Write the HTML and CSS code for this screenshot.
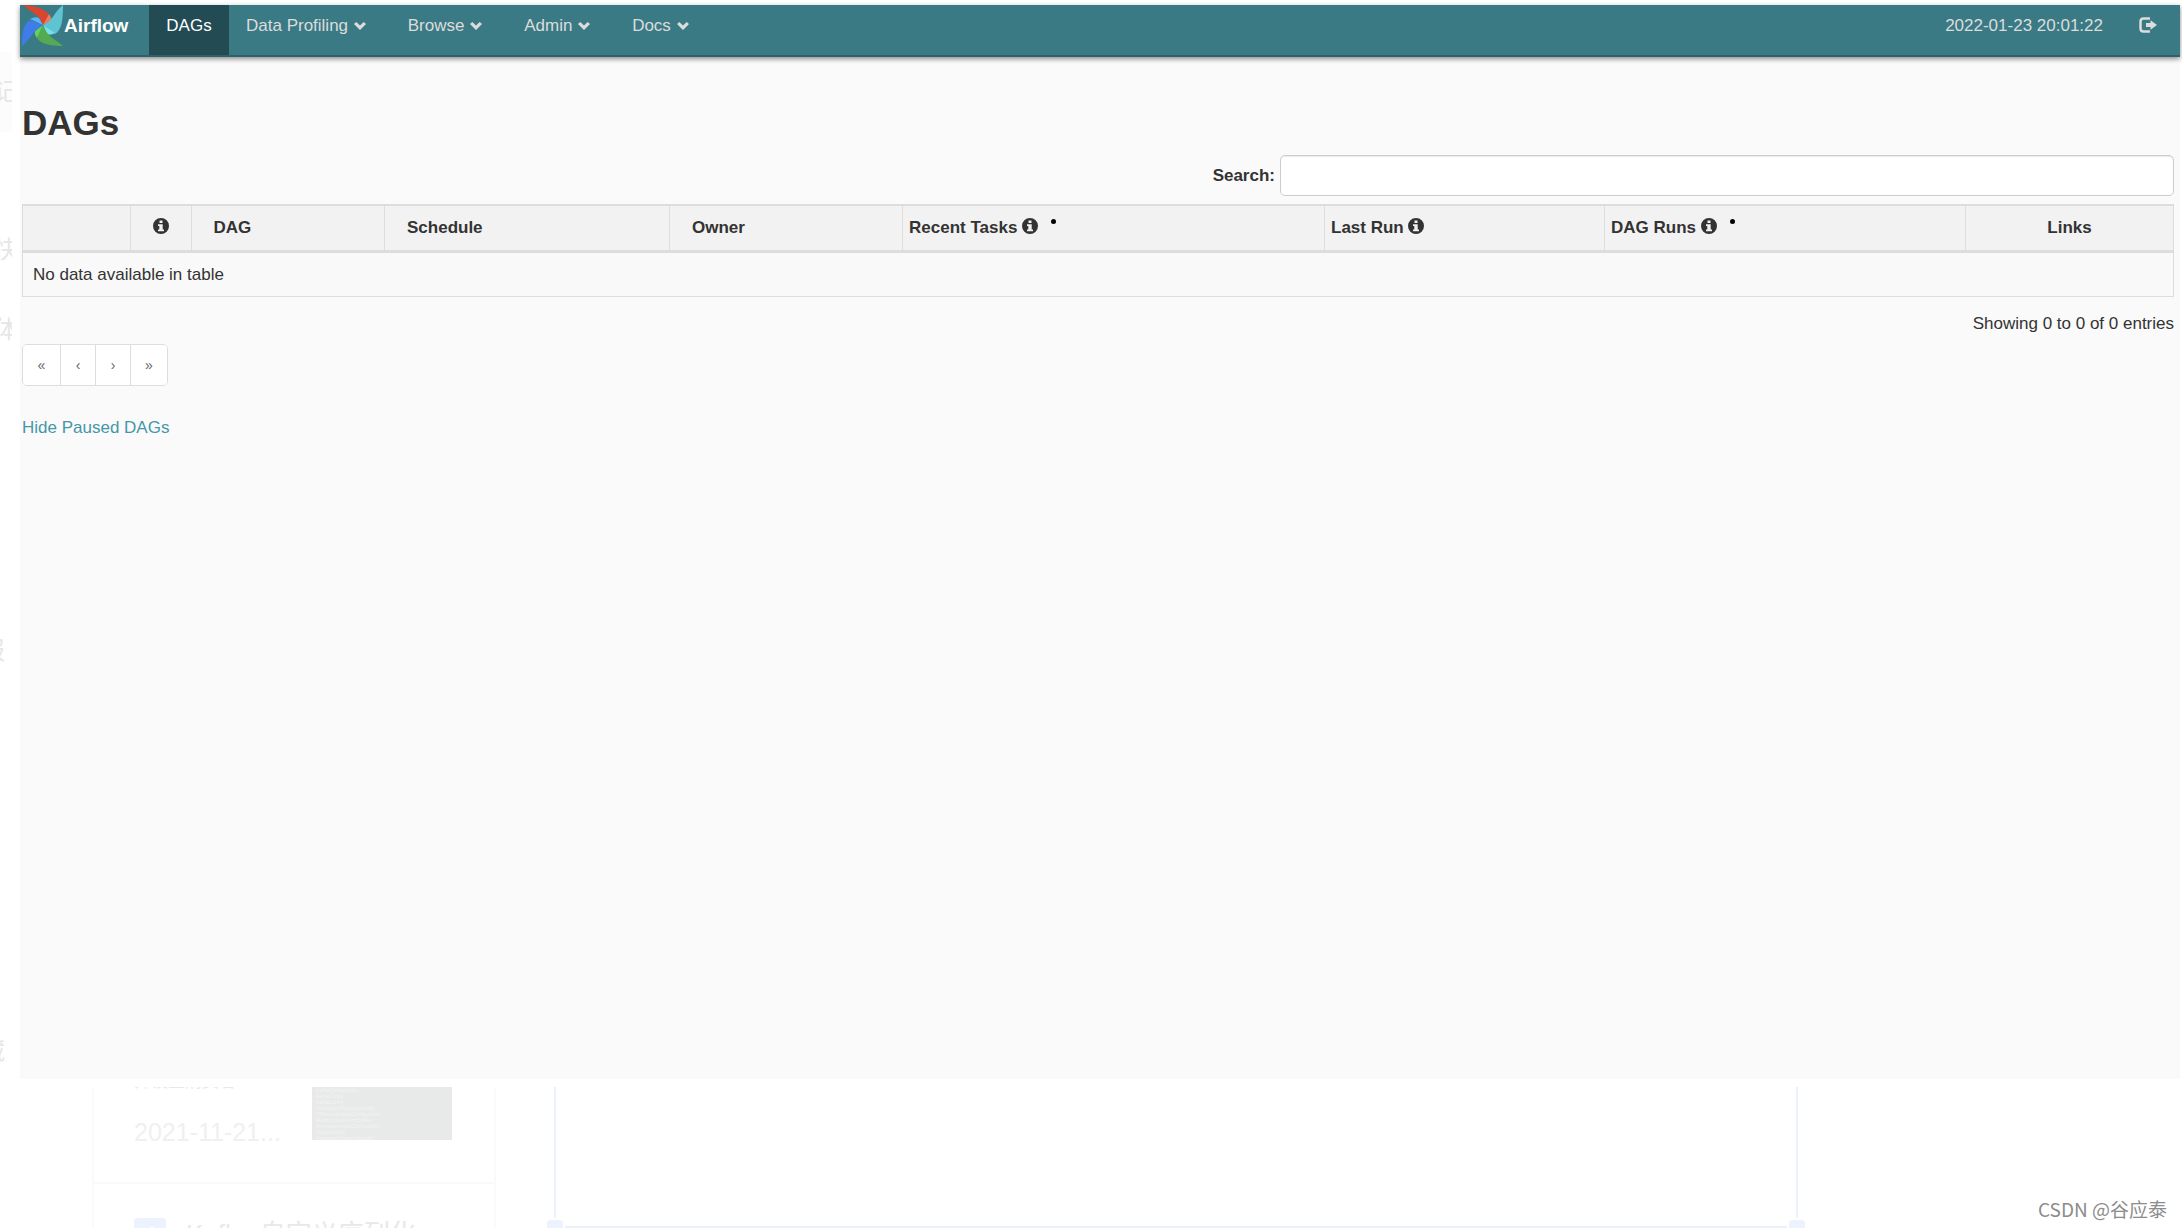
FILE: index.html
```html
<!DOCTYPE html>
<html lang="en">
<head>
<meta charset="utf-8">
<title>Airflow - DAGs</title>
<link rel="stylesheet" href="styles.css">
</head>
<body>
<svg class="defs" aria-hidden="true">
  <symbol id="chevron" viewBox="0 0 14 10"><path d="M1 3 3.300 1 7 4.500 10.700 1 13 3 7 9z"/></symbol>
  <symbol id="info" viewBox="0 0 16 16"><path fill-rule="evenodd" d="M8 0a8 8 0 1 1 0 16A8 8 0 0 1 8 0zM6.500 2.500v2.500h3V2.500zM5 6.300v1.600h1.300v3.600H5v1.700h6v-1.700H9.700V6.300z"/></symbol>
</svg>
<div class="screen">
  <aside class="rail">
    <span class="rail-item rail-first">记</span>
    <span class="rail-item rail-second">快</span>
    <span class="rail-item rail-third">体</span>
    <span class="rail-item rail-narrow rail-fourth">报</span>
    <span class="rail-item rail-narrow rail-fifth">藏</span>
  </aside>
  <div class="app">
    <nav class="navbar">
      <a class="brand" href="#">
        <svg class="logo" viewBox="0 0 42 42" aria-hidden="true">
          <path fill="#d9452f" d="M1 0C12 1 23 3 27 10L21 20C17 9 10 8 1 0z"/>
          <path fill="#f0785c" d="M27 9Q30 13 29 16L21 20z"/>
          <path fill="#5fc4d2" d="M41 0C41 14 40 25 33 29L21 20C31 16 32 7 41 0z"/>
          <path fill="#74e0ec" d="M33 28Q28 31 25 29L21 20z"/>
          <path fill="#54a951" d="M41 41C29 41 18 39 15 33L21 20C25 32 32 33 41 41z"/>
          <path fill="#63d063" d="M15 33Q12 29 13 26L21 20z"/>
          <path fill="#3f7ce8" d="M0 41C0 28 1 19 8 15L21 20C11 25 9 34 0 41z"/>
          <path fill="#58b4f6" d="M8 14Q13 11 17 13L21 20z"/>
        </svg>
        <span>Airflow</span>
      </a>
      <ul class="menu">
        <li><a class="active" href="#">DAGs</a></li>
        <li><a href="#">Data Profiling <svg class="chevron"><use href="#chevron"/></svg></a></li>
        <li><a href="#">Browse <svg class="chevron"><use href="#chevron"/></svg></a></li>
        <li><a href="#">Admin <svg class="chevron"><use href="#chevron"/></svg></a></li>
        <li><a href="#">Docs <svg class="chevron"><use href="#chevron"/></svg></a></li>
      </ul>
      <div class="session">
        <span>2022-01-23 20:01:22</span>
        <a href="#" aria-label="Log out"><svg class="logout" viewBox="0 0 18 16"><path fill="none" stroke="currentColor" stroke-width="2.500" d="M11 1.500H4.500Q1.500 1.500 1.500 4.500v7q0 3 3 3H11"/><path fill="currentColor" d="M7 6h4.500V3.200L18 8l-6.500 4.800V10H7z"/></svg></a>
      </div>
    </nav>
    <main class="content">
      <h1>DAGs</h1>
      <div class="search">
        <label for="search">Search:</label>
        <input id="search" type="search">
      </div>
      <table class="dags">
        <colgroup><col class="c-toggle"><col class="c-info"><col class="c-dag"><col class="c-schedule"><col class="c-owner"><col class="c-tasks"><col class="c-last"><col class="c-runs"><col class="c-links"></colgroup>
        <thead>
          <tr>
            <th></th>
            <th class="center"><svg class="info"><use href="#info"/></svg></th>
            <th>DAG</th>
            <th>Schedule</th>
            <th>Owner</th>
            <th class="tight">Recent Tasks <svg class="info"><use href="#info"/></svg><i class="dot"></i></th>
            <th class="tight">Last Run <svg class="info"><use href="#info"/></svg></th>
            <th class="tight">DAG Runs <svg class="info"><use href="#info"/></svg><i class="dot"></i></th>
            <th class="center">Links</th>
          </tr>
        </thead>
        <tbody><tr><td colspan="9">No data available in table</td></tr></tbody>
      </table>
      <p class="summary">Showing 0 to 0 of 0 entries</p>
      <div class="pager">
        <button type="button">«</button><button type="button">‹</button><button type="button">›</button><button type="button">»</button>
      </div>
      <a class="paused" href="#">Hide Paused DAGs</a>
    </main>
  </div>
</div>
<footer class="backdrop">
  <div class="notes">
    <div class="note">
      <div class="note-text"><span class="cut-line">并设置消费者...</span><span>2021-11-21...</span></div>
      <div class="thumb">
        <div>KafkaConfiguration</div><div>KafkaConfig</div><div>KafkaConfig</div><div>KafkaSyncProducerConfig</div><div>CResourceAutoConfiguration</div><div>MappingJacksonHttpMes</div><div>WorkspaceAutoConfiguration</div><div>MyListConfig</div><div>ParameterNamesModuleC</div>
      </div>
    </div>
    <div class="note-title"><svg class="note-icon" viewBox="0 0 32 32"><rect width="32" height="32" rx="3" fill="#edf3fe"/><path d="M10 16 18 8l8 8z" fill="#fff"/></svg><span>Kafka 自定义序列化</span></div>
  </div>
  <div class="canvas"><i class="handle handle-left"></i><i class="handle handle-right"></i></div>
  <span class="watermark">CSDN @谷应泰</span>
</footer>
</body>
</html>
```
FILE: styles.css
```css
* { box-sizing: border-box; }
body {
  margin: 0;
  height: 100vh;
  overflow: hidden;
  display: flex;
  flex-direction: column;
  background: #fff;
  color: #333;
  font: 17px/24px "Liberation Sans", Arial, "Noto Sans CJK SC", sans-serif;
}
.defs { display: none; }
a { text-decoration: none; }
.screen { flex: 1; min-height: 0; display: flex; padding: 5px 2px 8px 0; }

/* Sliver of the page behind, left of the app */
.rail { width: 20px; flex: none; display: flex; flex-direction: column; }
.rail-item {
  width: 12px;
  height: 56px;
  flex: none;
  overflow: hidden;
  display: flex;
  justify-content: center;
  color: #e6e6e6;
  font-size: 24px;
  line-height: 58px;
}
.rail-first { height: 80px; margin-top: 47px; line-height: 80px; background: #fcfcfc; }
.rail-second { margin-top: 89px; }
.rail-third { margin-top: 24px; }
.rail-narrow { width: 5px; justify-content: flex-end; }
.rail-fourth { margin-top: 265px; }
.rail-fifth { margin-top: 344px; }

.app { flex: 1; min-width: 0; background: #fafafa; }
.navbar {
  height: 52px;
  display: flex;
  background: #3a7a85;
  border-bottom: 2px solid #2e626b;
  box-shadow: 0 2px 5px rgba(0, 0, 0, .45);
  line-height: 42px;
}
.brand { width: 129px; padding-left: 2px; display: flex; color: #fff; font-size: 19px; font-weight: bold; }
.logo { width: 42px; height: 42px; }
.menu { display: flex; margin: 0; padding: 0; list-style: none; }
.menu a { display: block; height: 50px; padding: 0 17px; color: #dcdcdc; }
.menu li + li { margin-right: 7px; }
.menu .active { min-width: 80px; background: #224b54; color: #fff; text-align: center; }
.chevron { width: 14px; height: 10px; fill: currentColor; }
.session { margin-left: auto; padding-right: 23px; display: flex; gap: 36px; color: #dcdcdc; }
.session a { color: inherit; }
.logout { width: 18px; height: 16px; vertical-align: -2px; }

.content { padding: 42px 6px 0 2px; }
h1 { margin: 0; font-size: 35px; line-height: 48px; }
.search { display: flex; justify-content: flex-end; align-items: center; gap: 5px; margin: 8px 0; }
.search label { font-weight: bold; }
.search input {
  width: 894px;
  height: 41px;
  border: 1px solid #ccc;
  border-radius: 5px;
  background: #fff;
  box-shadow: inset 0 1px 1px rgba(0, 0, 0, .08);
  font: inherit;
}
.dags { width: 100%; table-layout: fixed; border-collapse: collapse; border: 1px solid #ddd; background: #f9f9f9; }
.dags thead { background: #f2f2f2; }
.dags th { height: 46px; padding: 0 22px; border: 1px solid #ddd; border-top-width: 2px; border-bottom-width: 3px; text-align: left; white-space: nowrap; }
.dags .center { padding: 0; text-align: center; }
.dags .tight { padding: 0 6px; }
.dags td { height: 45px; padding: 2px 10px 0; }
.c-toggle { width: 5%; }
.c-info { width: 61px; }
.c-dag { width: 9%; }
.c-schedule { width: 285px; }
.c-owner { width: 233px; }
.c-tasks { width: 422px; }
.c-last { width: 280px; }
.c-runs { width: 361px; }
.c-links { width: 208px; }
.info { width: 16px; height: 16px; fill: #333; vertical-align: -1px; }
.dot { display: inline-block; width: 5px; height: 5px; margin-left: 13px; border-radius: 50%; background: #000; vertical-align: 9px; }
.summary { margin: 15px 0 8px; text-align: right; }
.pager { display: flex; width: max-content; border: 1px solid #ddd; border-radius: 5px; background: #fff; overflow: hidden; }
.pager button { width: 35px; height: 40px; padding: 0; border: 0; background: #fff; color: #666; font: 14px/38px "Liberation Sans", Arial, sans-serif; }
.pager button + button { border-left: 1px solid #ddd; }
.pager button:first-child, .pager button:last-child { width: 37px; }
.paused { display: inline-block; margin-top: 30px; color: #4497a7; }

/* Faded page showing below the app */
.backdrop { position: relative; flex: none; height: 141px; display: flex; padding-left: 92px; overflow: hidden; color: #f0f0f0; }
.notes { width: 404px; border: solid #fafafa; border-width: 0 2px; }
.note { height: 97px; padding: 0 42px 0 40px; display: flex; justify-content: space-between; border-bottom: 2px solid #fafafa; }
.note-text { display: flex; flex-direction: column; gap: 30px; font-size: 25px; }
.cut-line { height: 3px; overflow: hidden; display: flex; align-items: flex-end; font-size: 17px; line-height: 16px; color: #e8e8e8; }
.thumb { width: 140px; height: 53px; overflow: hidden; padding-left: 4px; background: #e8e9e9; color: #f3f3f3; font-size: 5px; line-height: 6px; }
.note-title { display: flex; gap: 20px; padding: 34px 0 0 40px; font-size: 26px; line-height: 32px; white-space: nowrap; color: #e8e8e8; }
.note-icon { width: 32px; height: 32px; flex: none; }
.canvas { position: relative; width: 1244px; margin-left: 58px; border: 2px solid #eaf1fa; border-top: 0; }
.handle { position: absolute; bottom: -12px; width: 20px; height: 20px; border: 2px solid #fff; border-radius: 5px; background: #edf3fe; }
.handle-left { left: -11px; }
.handle-right { right: -11px; }
.watermark { position: absolute; right: 15px; bottom: 6px; color: #8c8c8c; font: 19px/26px "Noto Sans CJK SC", sans-serif; }
```
